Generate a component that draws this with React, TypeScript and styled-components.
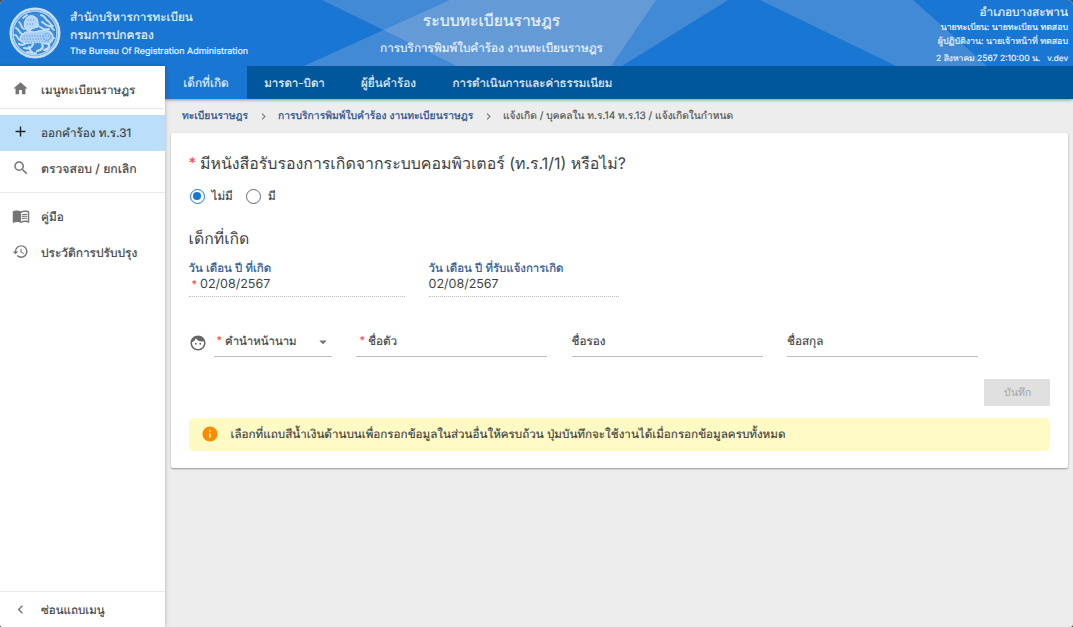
import React from "react";
import styled, { createGlobalStyle } from "styled-components";
import {
  MdHome, MdAdd, MdSearch, MdMenuBook, MdHistory, MdChevronLeft, MdChevronRight,
  MdFace, MdInfo, MdArrowDropDown,
} from "react-icons/md";

const GlobalStyle = createGlobalStyle`
  * { box-sizing: border-box; }
  body {
    margin: 0;
    background: #4a4a4a;
    font-family: Inter, "Liberation Sans", sans-serif;
    text-rendering: geometricPrecision;
    color: #3f3f3f;
  }
`;

const Page = styled.div`
  width: 1073px;
  height: 627px;
  display: flex;
  flex-direction: column;
  background: #ededed;
  border-radius: 5px 5px 3px 3px;
  overflow: hidden;
`;

const Text = styled.span<{ $size: number; $stroke?: number }>`
  font-size: ${p => p.$size}px;
  line-height: 18px;
  white-space: nowrap;
  -webkit-text-stroke: ${p => p.$stroke ?? 0.18}px currentColor;
`;

/* Header */
const Header = styled.header`
  position: relative;
  flex: none;
  height: 66px;
  display: grid;
  grid-template-columns: 380px 223px 1fr;
  background: #1976d2;
  color: #e9f3fc;
`;
const Facets = styled.svg`
  position: absolute;
  inset: 0;
`;
const Brand = styled.div`
  position: relative;
  display: flex;
  align-items: flex-start;
  padding: 7px 0 0 9px;
  gap: 9px;
`;
const BrandText = styled.div`
  display: flex;
  flex-direction: column;
  padding-top: 1px;
  > :last-child { line-height: 15px; }
`;
const Title = styled.div`
  position: relative;
  display: flex;
  flex-direction: column;
  align-items: center;
  padding-top: 12px;
  gap: 9px;
`;
const Account = styled.div`
  position: relative;
  display: flex;
  flex-direction: column;
  align-items: flex-end;
  padding: 3px 5px 0 0;
  > :nth-child(2) { line-height: 14px; }
  > :nth-child(3) { line-height: 14px; }
`;
const DateLine = styled.div`
  display: flex;
  align-items: baseline;
  gap: 7px;
  line-height: 18px;
`;

const Body = styled.div`
  flex: 1;
  display: flex;
  min-height: 0;
`;

/* Sidebar */
const Sidebar = styled.nav`
  position: relative;
  z-index: 1;
  width: 165px;
  flex: none;
  display: flex;
  flex-direction: column;
  background: #fff;
  box-shadow: 0 0 4px rgba(0, 0, 0, 0.28);
`;
const MenuItem = styled.a<{ $active?: boolean; $height?: number; $top?: number }>`
  height: ${p => p.$height ?? 36}px;
  flex: none;
  display: flex;
  align-items: center;
  gap: 11px;
  padding: ${p => p.$top ?? 0}px 0 0 11px;
  background: ${p => (p.$active ? "#bbdefb" : "transparent")};
`;
const IconSlot = styled.span<{ $color?: string; $lift?: number }>`
  width: 19px;
  display: flex;
  justify-content: center;
  padding-bottom: ${p => p.$lift ?? 3}px;
  color: ${p => p.$color ?? "#757575"};
`;
const Rule = styled.hr<{ $before: number; $after: number }>`
  width: 100%;
  border: 0;
  border-top: 1px solid #e9e9e9;
  margin: ${p => p.$before}px 0 ${p => p.$after}px;
`;
const Spacer = styled.div`
  flex: 1;
`;

/* Main column */
const Main = styled.main`
  flex: 1;
  min-width: 0;
  display: flex;
  flex-direction: column;
`;
const Tabs = styled.div`
  height: 33px;
  flex: none;
  display: flex;
  background: #01579b;
  color: #e3eef7;
  box-shadow: 0 1px 3px rgba(0, 0, 0, 0.4);
`;
const Tab = styled.div<{ $active?: boolean; $width: number }>`
  width: ${p => p.$width}px;
  display: flex;
  align-items: center;
  justify-content: center;
  background: ${p => (p.$active ? "#1976d2" : "transparent")};
`;
const Breadcrumb = styled.div`
  height: 34px;
  display: flex;
  align-items: center;
  padding-left: 17px;
  color: #555;
`;
const Crumb = styled.a<{ $width: number }>`
  width: ${p => p.$width}px;
  display: flex;
  color: #27508f;
`;
const Separator = styled.span<{ $width: number }>`
  width: ${p => p.$width}px;
  display: flex;
  justify-content: center;
  color: #777;
`;
const Card = styled.section`
  height: 335px;
  margin: 0 5px 0 5.5px;
  padding: 21px 18px 0;
  background: #fff;
  border-radius: 2px;
  box-shadow: 0 1px 2px rgba(0, 0, 0, 0.38);
`;
const Question = styled.h1`
  margin: 0;
  height: 20px;
  display: flex;
  align-items: center;
  font-weight: 400;
  gap: 4px;
`;
const Star = styled.span<{ $size?: number }>`
  color: #f44336;
  font-size: ${p => p.$size ?? 11}px;
  line-height: 14px;
  padding-bottom: 2px;
`;
const Radios = styled.div`
  height: 16px;
  margin-top: 14px;
  display: flex;
  align-items: center;
  padding-left: 1px;
`;
const Option = styled.label<{ $width: number }>`
  width: ${p => p.$width}px;
  display: flex;
  align-items: center;
  gap: 7px;
`;
const Dot = styled.span<{ $on?: boolean }>`
  width: 15px;
  height: 15px;
  border-radius: 50%;
  border: 1.5px solid ${p => (p.$on ? "#1976d2" : "#666")};
  display: flex;
  align-items: center;
  justify-content: center;
  &::after {
    content: "";
    width: 8px;
    height: 8px;
    border-radius: 50%;
    background: ${p => (p.$on ? "#1976d2" : "transparent")};
  }
`;
const Heading = styled.h2`
  margin: 25px 0 0;
  height: 20px;
  display: flex;
  align-items: center;
  font-weight: 400;
`;
const Dates = styled.div`
  display: flex;
  margin-top: 11px;
  gap: 24px;
`;
const DateField = styled.div<{ $width: number }>`
  width: ${p => p.$width}px;
  height: 37px;
  border-bottom: 1px dotted #bdbdbd;
  display: flex;
  flex-direction: column;
`;
const DateLabel = styled.div`
  color: #27508f;
  height: 16px;
  display: flex;
  align-items: center;
`;
const DateValue = styled.div`
  height: 18px;
  display: flex;
  align-items: center;
  gap: 3px;
`;
const Names = styled.div`
  margin-top: 29px;
  height: 31px;
  display: flex;
`;
const FaceSlot = styled.div`
  width: 25px;
  padding-top: 8px;
  color: #666;
`;
const Field = styled.div<{ $width: number; $pad?: number }>`
  width: ${p => p.$width}px;
  margin-right: 24.5px;
  padding-left: ${p => p.$pad ?? 0}px;
  border-bottom: 1px solid #bdbdbd;
  display: flex;
  align-items: center;
  gap: 3px;
  &:last-child { margin-right: 0; }
`;
const Caret = styled.span`
  margin-left: auto;
  padding-top: 2px;
  display: flex;
  color: #757575;
`;
const Actions = styled.div`
  display: flex;
  justify-content: flex-end;
  margin-top: 22px;
`;
const SaveButton = styled.button`
  width: 66px;
  height: 27px;
  padding: 0 0 2px;
  border: 0;
  border-radius: 1px;
  background: #e0e0e0;
  color: #a9a9a9;
  font-family: inherit;
`;
const Notice = styled.div`
  margin-top: 12px;
  height: 33px;
  border-radius: 5px;
  background: #fff9c4;
  display: flex;
  align-items: center;
  gap: 12px;
  padding: 0 0 2px 12px;
`;

const Seal = () => (
  <svg width="52" height="52" viewBox="0 0 52 52" fill="none" stroke="#c4def6" strokeLinecap="round">
    <circle cx="26" cy="26" r="24.2" strokeWidth="2.6" />
    <circle cx="26" cy="26" r="21.9" strokeWidth="1.8" strokeDasharray="1.3 1" stroke="#a9cff2" />
    <circle cx="26" cy="26" r="20.6" fill="#3d8bdc" stroke="none" />
    <path d="M16 14c2-5 6-7 10-4 4 2 2 6 4 9-4 3-7 1-9 5-4 0-7-4-5-10z" fill="#b5d6f4" strokeWidth="1.2" />
    <path d="M14 27c5-5 10 0 16-3 7-2 13 0 14 6 0 6-5 8-10 6-7-2-12 1-18 0-6-1-6-6-2-9z" fill="#a9cff2" strokeWidth="1.5" />
    <path d="M17 36c-3 3-5 2-7 1M24 37c-1 4-5 5-9 4M33 37c2 3 0 6-5 7M38 36c4 2 2 6-3 7M20 40c2 3 0 4 3 5" strokeWidth="2.2" />
    <path d="M32 8c5 1 4 5 7 6 3 2 2 4 5 5M33 15c3 1 3 4 7 4 3 0 3 3 5 4M31 20c3 2 6 3 9 2" strokeWidth="1.9" />
    <path d="M10 15c3 2 1 5 5 7M7 21c3 1 3 5 6 6M6 28c3 0 2 4 5 5M18 45c3 0 5 2 9 1M37 43l3-3M14 11l4-3M42 33l3-2" strokeWidth="1.9" />
    <path d="M15 29h28M13 32h30M17 35h22M19 13h6M18 17h8" stroke="#5a9fe2" strokeWidth="1.1" strokeDasharray="0.4 2.3" />
    <circle cx="38" cy="30" r="3.6" stroke="#64a5e4" strokeWidth="1" strokeDasharray="1.6 1" />
  </svg>
);

export default function App() {
  return (
    <>
      <GlobalStyle />
      <Page>
        <Header>
          <Facets width="1073" height="66" fill="#fdebe3" fillOpacity=".18">
            <path d="M322 0H728L622 66H457z" />
            <path d="M304 66L450 0H656L611 66z" />
            <path d="M760 0H913L987 66H896z" />
          </Facets>
          <Brand>
            <Seal />
            <BrandText>
              <Text $size={11.65}>สำนักบริหารการทะเบียน</Text>
              <Text $size={11.9}>กรมการปกครอง</Text>
              <Text $size={8.97}>The Bureau Of Registration Administration</Text>
            </BrandText>
          </Brand>
          <Title>
            <Text $size={15.7}>ระบบทะเบียนราษฎร</Text>
            <Text $size={11.75}>การบริการพิมพ์ใบคำร้อง งานทะเบียนราษฎร</Text>
          </Title>
          <Account>
            <Text $size={11.8}>อำเภอบางสะพาน</Text>
            <Text $size={8.75}>นายทะเบียน: นายทะเบียน ทดสอบ</Text>
            <Text $size={8.8}>ผู้ปฏิบัติงาน: นายเจ้าหน้าที่ ทดสอบ</Text>
            <DateLine>
              <Text $size={8.5}>2 สิงหาคม 2567 2:10:00 น.</Text>
              <Text $size={8.2}>v.dev</Text>
            </DateLine>
          </Account>
        </Header>
        <Body>
          <Sidebar>
            <MenuItem $height={42} $top={6}>
              <IconSlot><MdHome size={17} /></IconSlot>
              <Text $size={11.65}>เมนูทะเบียนราษฎร</Text>
            </MenuItem>
            <Rule $before={0} $after={6} />
            <MenuItem $active>
              <IconSlot $color="#222"><MdAdd size={17} /></IconSlot>
              <Text $size={11.7}>ออกคำร้อง ท.ร.31</Text>
            </MenuItem>
            <MenuItem>
              <IconSlot><MdSearch size={18} /></IconSlot>
              <Text $size={12.2}>ตรวจสอบ / ยกเลิก</Text>
            </MenuItem>
            <Rule $before={5} $after={6} />
            <MenuItem>
              <IconSlot><MdMenuBook size={18} /></IconSlot>
              <Text $size={11.8}>คู่มือ</Text>
            </MenuItem>
            <MenuItem>
              <IconSlot><MdHistory size={17} /></IconSlot>
              <Text $size={11.9}>ประวัติการปรับปรุง</Text>
            </MenuItem>
            <Spacer />
            <Rule $before={0} $after={0} />
            <MenuItem $height={35}>
              <IconSlot $lift={1}><MdChevronLeft size={17} /></IconSlot>
              <Text $size={11.5}>ซ่อนแถบเมนู</Text>
            </MenuItem>
          </Sidebar>
          <Main>
            <Tabs>
              <Tab $active $width={82}><Text $size={11.8}>เด็กที่เกิด</Text></Tab>
              <Tab $width={95}><Text $size={11.5}>มารดา-บิดา</Text></Tab>
              <Tab $width={93}><Text $size={11.7}>ผู้ยื่นคำร้อง</Text></Tab>
              <Tab $width={195}><Text $size={11.45}>การดำเนินการและค่าธรรมเนียม</Text></Tab>
            </Tabs>
            <Breadcrumb>
              <Crumb $width={66}><Text $size={10.3} $stroke={0.25}>ทะเบียนราษฎร</Text></Crumb>
              <Separator $width={30}><MdChevronRight size={13} /></Separator>
              <Crumb $width={195}><Text $size={10.3} $stroke={0.25}>การบริการพิมพ์ใบคำร้อง งานทะเบียนราษฎร</Text></Crumb>
              <Separator $width={30}><MdChevronRight size={13} /></Separator>
              <Text $size={10.2}>แจ้งเกิด / บุคคลใน ท.ร.14 ท.ร.13 / แจ้งเกิดในกำหนด</Text>
            </Breadcrumb>
            <Card>
              <Question>
                <Star $size={15}>*</Star>
                <Text $size={15.9} $stroke={0}>มีหนังสือรับรองการเกิดจากระบบคอมพิวเตอร์ (ท.ร.1/1) หรือไม่?</Text>
              </Question>
              <Radios>
                <Option $width={56.5}><Dot $on /><Text $size={11.7}>ไม่มี</Text></Option>
                <Option $width={40}><Dot /><Text $size={11.7}>มี</Text></Option>
              </Radios>
              <Heading><Text $size={15.8} $stroke={0}>เด็กที่เกิด</Text></Heading>
              <Dates>
                <DateField $width={216}>
                  <DateLabel><Text $size={11.4}>วัน เดือน ปี ที่เกิด</Text></DateLabel>
                  <DateValue><Star>&nbsp;*</Star><Text $size={12.5} $stroke={0}>02/08/2567</Text></DateValue>
                </DateField>
                <DateField $width={190}>
                  <DateLabel><Text $size={11.4}>วัน เดือน ปี ที่รับแจ้งการเกิด</Text></DateLabel>
                  <DateValue><Text $size={12.5} $stroke={0}>02/08/2567</Text></DateValue>
                </DateField>
              </Dates>
              <Names>
                <FaceSlot><MdFace size={18} /></FaceSlot>
                <Field $width={118} $pad={3}>
                  <Star>*</Star>
                  <Text $size={11.4}>คำนำหน้านาม</Text>
                  <Caret><MdArrowDropDown size={18} /></Caret>
                </Field>
                <Field $width={191} $pad={3.5}><Star>*</Star><Text $size={11.7}>ชื่อตัว</Text></Field>
                <Field $width={191}><Text $size={11.7}>ชื่อรอง</Text></Field>
                <Field $width={190.5}><Text $size={11.7}>ชื่อสกุล</Text></Field>
              </Names>
              <Actions>
                <SaveButton><Text $size={10.3} $stroke={0.1}>บันทึก</Text></SaveButton>
              </Actions>
              <Notice>
                <MdInfo size={18} color="#fb8c00" />
                <Text $size={11.63}>เลือกที่แถบสีน้ำเงินด้านบนเพื่อกรอกข้อมูลในส่วนอื่นให้ครบถ้วน ปุ่มบันทึกจะใช้งานได้เมื่อกรอกข้อมูลครบทั้งหมด</Text>
              </Notice>
            </Card>
          </Main>
        </Body>
      </Page>
    </>
  );
}
